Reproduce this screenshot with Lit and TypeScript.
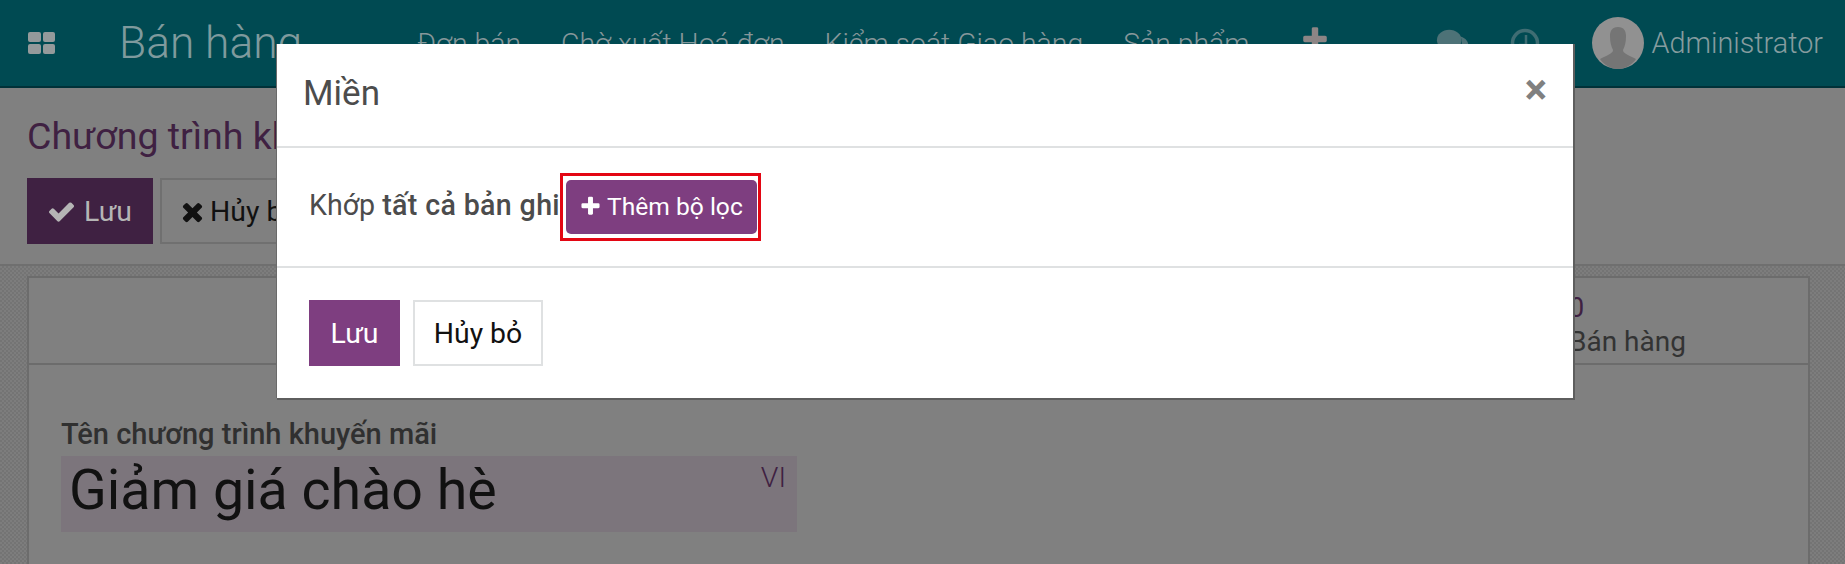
import { LitElement, html, css, svg } from "lit";
import { customElement } from "lit/decorators.js";

const ICONS = {
  check: "M1671 566q0 40-28 68l-724 724-136 136q-28 28-68 28t-68-28l-136-136-362-362q-28-28-28-68t28-68l136-136q28-28 68-28t68 28l294 295 656-657q28-28 68-28t68 28l136 136q28 28 28 68z",
  times: "M1490 1322q0 40-28 68l-136 136q-28 28-68 28t-68-28l-294-294-294 294q-28 28-68 28t-68-28l-136-136q-28-28-28-68t28-68l294-294-294-294q-28-28-28-68t28-68l136-136q28-28 68-28t68 28l294 294 294-294q28-28 68-28t68 28l136 136q28 28 28 68t-28 68l-294 294 294 294q28 28 28 68z",
  plus: "M1600 736v192q0 40-28 68t-68 28h-416v416q0 40-28 68t-68 28h-192q-40 0-68-28t-28-68v-416h-416q-40 0-68-28t-28-68v-192q0-40 28-68t68-28h416v-416q0-40 28-68t68-28h192q40 0 68 28t28 68v416h416q40 0 68 28t28 68z",
};

const icon = (name: keyof typeof ICONS, cls: string) =>
  html`<svg class=${cls} viewBox="0 0 1792 1792" fill="currentColor">${svg`<path d=${ICONS[name]}></path>`}</svg>`;

@customElement("app-root")
export class AppRoot extends LitElement {
  static styles = css`
    :host {
      display: block;
      width: 1845px;
      height: 564px;
      overflow: hidden;
      position: relative;
      background: #808080;
      font-family: Roboto, "Noto Sans", sans-serif;
    }
    .nav {
      height: 86px;
      border-bottom: 2px solid #003138;
      background: #004a52;
      display: flex;
      align-items: center;
      padding-left: 28px;
      padding-right: 22px;
      color: #8a9ea1;
      box-sizing: content-box;
    }
    .apps {
      width: 27px;
      height: 22px;
      display: grid;
      grid-template-columns: 1fr 1fr;
      gap: 2px;
      flex: none;
    }
    .apps i {
      background: #949a9b;
      border-radius: 2px;
    }
    .brand {
      font-size: 44.3px;
      font-weight: 300;
      margin-left: 64px;
      width: 298px;
      flex: none;
      color: #7f9a9d;
    }
    .menu {
      display: flex;
      gap: 40px;
      font-size: 28.4px;
      font-weight: 300;
      flex: none;
      color: #86979a;
    }
    .navplus {
      width: 30px;
      height: 30px;
      margin-left: 50px;
      margin-bottom: 6px;
      color: #8c8585;
      flex: none;
    }
    .chat { margin-left: auto; width: 34px; height: 34px; flex: none; }
    .clock { margin-left: 40px; width: 30px; height: 30px; flex: none; }
    .avatar { margin-left: 52px; width: 52px; height: 52px; flex: none; }
    .user {
      margin-left: 7px;
      font-size: 28.8px;
      font-weight: 300;
      color: #869c9f;
    }
    .panel {
      height: 149px;
      border-bottom: 2px solid #6f6f6f;
      padding: 27px 27px 0;
      box-sizing: content-box;
    }
    .crumb {
      font-size: 37.5px;
      font-weight: 400;
      color: #3f2142;
      line-height: 42px;
      white-space: nowrap;
    }
    .actions {
      display: flex;
      gap: 7px;
      margin-top: 21px;
    }
    .pbtn {
      height: 66px;
      box-sizing: border-box;
      display: flex;
      align-items: center;
      font-size: 28.4px;
      font-weight: 400;
      padding: 0 20px;
    }
    .pbtn.save { background: #3f2142; color: #b5b5b5; width: 126px; gap: 8px; }
    .pbtn.cancel { border: 2px solid #707070; color: #111; padding: 0 16px; gap: 3px; }
    .pbtn svg { width: 29px; height: 29px; }
    .content {
      height: 298px;
      box-sizing: border-box;
      padding: 10px 35px 0 27px;
      background-color: #7d7d7d;
      background-image:
        linear-gradient(45deg, #747474 25%, transparent 25%, transparent 75%, #747474 75%),
        linear-gradient(45deg, #747474 25%, transparent 25%, transparent 75%, #747474 75%);
      background-size: 4px 4px;
      background-position: 0 0, 2px 2px;
    }
    .sheet {
      height: 100%;
      background: #808080;
      border: 2px solid #6c6c6c;
      border-bottom: none;
      box-sizing: border-box;
    }
    .stats {
      height: 85px;
      border-bottom: 2px solid #6c6c6c;
      box-sizing: content-box;
      display: flex;
      justify-content: flex-end;
      padding-right: 124px;
    }
    .stat {
      display: flex;
      flex-direction: column;
      padding-top: 14px;
      width: 115px;
    }
    .stat b {
      font-weight: 400;
      font-size: 27px;
      line-height: 33px;
      color: #3f2142;
    }
    .stat span {
      font-size: 28px;
      line-height: 34px;
      color: #333;
      white-space: nowrap;
    }
    .body {
      padding: 51px 0 0 32px;
    }
    .label {
      font-size: 29px;
      font-weight: 500;
      color: #303030;
      line-height: 36px;
    }
    .field {
      margin-top: 4px;
      width: 736px;
      height: 76px;
      background: #7c757c;
      display: flex;
      justify-content: space-between;
      padding: 0 11px 0 8px;
      box-sizing: border-box;
    }
    .field .val {
      font-size: 55.5px;
      color: #111;
      line-height: 70px;
    }
    .field .lang {
      font-size: 28.5px;
      color: #3f2142;
      line-height: 40px;
      padding-top: 2px;
      font-weight: 300;
    }
    .modal {
      position: absolute;
      left: 277px;
      top: 44px;
      width: 1296px;
      height: 354px;
      background: #fff;
      box-shadow: 1px 1px 0 1px #5e5e5e, -1px 0 0 #6a6a6a;
      display: flex;
      flex-direction: column;
      color: #4c4c4c;
    }
    .mhead {
      height: 74px;
      border-bottom: 2px solid #dfe1e2;
      display: flex;
      justify-content: space-between;
      padding: 28px 26px 0 26px;
      box-sizing: content-box;
    }
    .mtitle {
      font-size: 35px;
      font-weight: 400;
      line-height: 44px;
    }
    .close {
      font-size: 42px;
      line-height: 36px;
      font-weight: 700;
      color: #808080;
    }
    .mbody {
      height: 118px;
      border-bottom: 2px solid #dfe1e2;
      display: flex;
      align-items: center;
      padding-left: 32px;
      box-sizing: content-box;
    }
    .match {
      font-size: 28.6px;
      white-space: nowrap;
      padding-bottom: 5px;
    }
    .match b { font-weight: 500; letter-spacing: 0.35px; }
    .hl {
      margin-left: 0;
      border: 3px solid #e30613;
      padding: 4px 1px 4px 3px;
      display: flex;
    }
    .add {
      width: 191px;
      height: 54px;
      box-sizing: border-box;
      border-radius: 5px;
      background: #7e3e80;
      color: #fff;
      display: flex;
      align-items: center;
      gap: 5px;
      padding: 0 0 2px 13px;
      font-size: 24.6px;
    }
    .add svg { width: 23px; height: 23px; flex: none; }
    .mfoot {
      display: flex;
      gap: 13px;
      padding: 32px 32px 0;
    }
    .btn {
      height: 66px;
      box-sizing: border-box;
      display: flex;
      align-items: center;
      justify-content: center;
      font-size: 28.4px;
      font-weight: 400;
    }
    .btn.save { width: 91px; background: #7e3e80; color: #fff; }
    .btn.cancel { width: 130px; border: 2px solid #dfe1e2; color: #111; }
  `;

  render() {
    return html`
      <header class="nav">
        <div class="apps"><i></i><i></i><i></i><i></i></div>
        <div class="brand">Bán hàng</div>
        <nav class="menu">
          <span>Đơn bán</span><span>Chờ xuất Hoá đơn</span><span>Kiểm soát Giao hàng</span><span>Sản phẩm</span>
        </nav>
        ${icon("plus", "navplus")}
        <svg class="chat" viewBox="0 0 36 36">
          <ellipse cx="14" cy="15" rx="13" ry="11" fill="#4d7277"></ellipse>
          <path d="M26 11c6 2 9 6 8 11-1 3-2 4-3 5l2 5-6-3c-4 1-8 0-10-2 8 0 13-6 9-16z" fill="#4d7277"></path>
        </svg>
        <svg class="clock" viewBox="0 0 30 30">
          <circle cx="15" cy="15" r="12.5" fill="none" stroke="#3f6d73" stroke-width="3.5"></circle>
          <path d="M16 7v10h-7" fill="none" stroke="#3f6d73" stroke-width="2.5"></path>
        </svg>
        <svg class="avatar" viewBox="0 0 52 52">
          <circle cx="26" cy="26" r="26" fill="#919191"></circle>
          <path d="M26 10c-6 0-8 4-8 9 0 6 1 10 3 14 0 3-3 4-13 9 4 6 11 10 18 10s14-4 18-10c-10-5-13-6-13-9 2-4 3-8 3-14 0-5-2-9-8-9z" fill="#757575"></path>
        </svg>
        <span class="user">Administrator</span>
      </header>

      <section class="panel">
        <div class="crumb">Chương trình khuyến mãi</div>
        <div class="actions">
          <div class="pbtn save">${icon("check", "")}Lưu</div>
          <div class="pbtn cancel">${icon("times", "")}Hủy bỏ</div>
        </div>
      </section>

      <main class="content">
        <div class="sheet">
          <div class="stats">
            <div class="stat"><b>0</b><span>Bán hàng</span></div>
          </div>
          <div class="body">
            <div class="label">Tên chương trình khuyến mãi</div>
            <div class="field"><span class="val">Giảm giá chào hè</span><span class="lang">VI</span></div>
          </div>
        </div>
      </main>

      <div class="modal">
        <div class="mhead">
          <div class="mtitle">Miền</div>
          <div class="close">×</div>
        </div>
        <div class="mbody">
          <span class="match">Khớp <b>tất cả bản ghi</b></span>
          <div class="hl">
            <div class="add">${icon("plus", "")}Thêm bộ lọc</div>
          </div>
        </div>
        <div class="mfoot">
          <div class="btn save">Lưu</div>
          <div class="btn cancel">Hủy bỏ</div>
        </div>
      </div>
    `;
  }
}
